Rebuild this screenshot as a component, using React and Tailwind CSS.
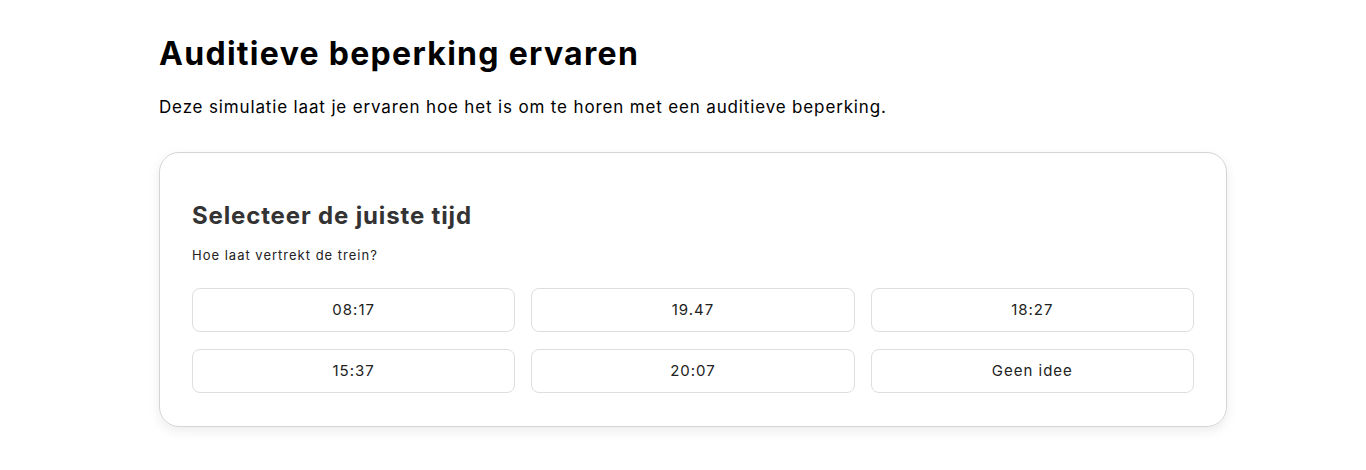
const OPTIONS = ['08:17', '19.47', '18:27', '15:37', '20:07', 'Geen idee'];

export default function App() {
  return (
    <div className="min-h-[470px] bg-white font-['Inter','Noto_Sans',sans-serif] text-black">
      <div className="ml-[159px] w-[1068px] pt-[34px]">
        <h1 className="text-[32px] font-bold leading-[40px] tracking-[1.3px]">
          Auditieve beperking ervaren
        </h1>
        <p className="mt-[21px] text-[17px] leading-[24px] tracking-[0.85px]">
          Deze simulatie laat je ervaren hoe het is om te horen met een auditieve beperking.
        </p>

        <div className="mt-[33px] rounded-[20px] border border-[#d4d4d4] px-[32px] pb-[33px] pt-[48px] shadow-[0_4px_12px_rgba(0,0,0,0.08)]">
          <h2 className="text-[24px] font-bold leading-[30px] tracking-[0.85px] text-[#333]">
            Selecteer de juiste tijd
          </h2>
          <p className="mt-[15px] text-[13px] leading-[18px] tracking-[1px] text-[#222]">
            Hoe laat vertrekt de trein?
          </p>
          <div className="mt-[24px] grid grid-cols-3 gap-x-[16px] gap-y-[17px]">
            {OPTIONS.map((o) => (
              <button
                key={o}
                type="button"
                className="h-[44px] rounded-[8px] border border-[#dedede] bg-white text-[15px] tracking-[1px] text-[#222]"
              >
                {o}
              </button>
            ))}
          </div>
        </div>
      </div>
    </div>
  );
}
